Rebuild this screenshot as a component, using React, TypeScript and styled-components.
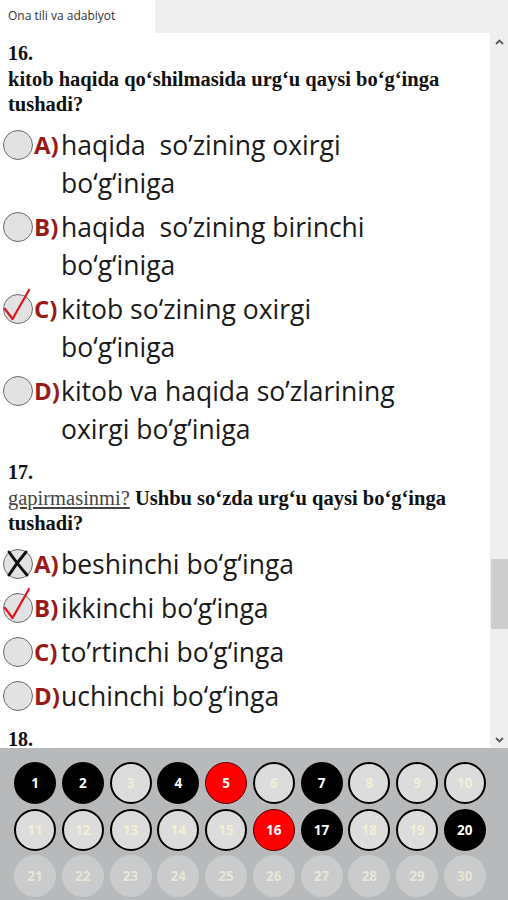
import { FC } from "react";
import styled, { createGlobalStyle, css } from "styled-components";

const GlobalStyle = createGlobalStyle`
  html, body {
    margin: 0;
    padding: 0;
    background: #fff;
  }
  body {
    font-family: "Open Sans", "Noto Sans", sans-serif;
  }
`;

const Screen = styled.div`
  width: 508px;
  height: 900px;
  display: flex;
  flex-direction: column;
  overflow: hidden;
`;

const TabBar = styled.div`
  height: 33px;
  flex-shrink: 0;
  display: flex;
  background: #efefef;
`;

const Tab = styled.div`
  width: 155px;
  box-sizing: border-box;
  padding: 0 0 2px 8px;
  display: flex;
  align-items: center;
  background: #fff;
  font-size: 12px;
  color: #333;
`;

const Body = styled.div`
  flex: 1;
  min-height: 0;
  display: flex;
`;

const Content = styled.div`
  flex: 1;
  overflow: hidden;
  background: #fff;
  padding-top: 7px;
`;

const Scrollbar = styled.div`
  width: 18px;
  flex-shrink: 0;
  display: flex;
  flex-direction: column;
  background: #efefef;
`;

const ArrowButton = styled.div`
  height: 17px;
  display: flex;
  align-items: center;
  justify-content: center;
`;

const Track = styled.div`
  flex: 1;
`;

const Thumb = styled.div<{ $offset: number; $size: number }>`
  margin: ${(p) => p.$offset}px 0 0 1px;
  height: ${(p) => p.$size}px;
  background: #cdcdcd;
`;

const Question = styled.div`
  margin-bottom: 11px;
`;

const QNumber = styled.div`
  padding-left: 8px;
  font-family: "Liberation Serif", "Times New Roman", serif;
  font-weight: bold;
  font-size: 20px;
  line-height: 27px;
  color: #111;
`;

const QText = styled.div`
  padding-left: 8px;
  margin-bottom: 9px;
  font-family: "Liberation Serif", "Times New Roman", serif;
  font-weight: bold;
  font-size: 20.5px;
  line-height: 25px;
  color: #111;
  white-space: nowrap;
`;

const Underlined = styled.span`
  font-weight: normal;
  color: #444;
  text-decoration: underline;
`;

const Line = styled.div`
  white-space: pre;
`;

const OptionList = styled.div`
  display: flex;
  flex-direction: column;
  gap: 6px;
`;

const OptionRow = styled.div`
  display: flex;
  align-items: flex-start;
  font-size: 26.5px;
  line-height: 38px;
  color: #1a1a1a;
`;

const Radio = styled.div`
  position: relative;
  flex-shrink: 0;
  width: 30px;
  height: 30px;
  box-sizing: border-box;
  margin: 4px 1px 0 3px;
  border-radius: 50%;
  border: 1.5px solid #6b6b6b;
  background: #e2e2e2;
`;

const Mark = styled.svg`
  position: absolute;
  left: -1.5px;
  top: -1.5px;
  overflow: visible;
`;

const Letter = styled.span`
  width: 27px;
  flex-shrink: 0;
  font-size: 24px;
  font-weight: bold;
  color: #9a1a1a;
  white-space: nowrap;
`;

const OptionText = styled.div`
  flex: 1;
`;

const Palette = styled.div`
  height: 152px;
  flex-shrink: 0;
  box-sizing: border-box;
  padding: 14px 0 0 14px;
  display: grid;
  grid-template-columns: repeat(10, 42px);
  grid-auto-rows: 42px;
  column-gap: 5.75px;
  row-gap: 4.5px;
  background: #b7b9bb;
`;

type CellState = "done" | "wrong" | "open" | "off";

const cellStyles = {
  done: css`
    background: #000;
    border: 2px solid #000;
    color: #fff;
  `,
  wrong: css`
    background: #ff0000;
    border: 1.5px solid #5a0000;
    color: #fff;
  `,
  open: css`
    background: #dcdcdc;
    border: 2.5px solid #000;
    color: #f3eed6;
  `,
  off: css`
    background: #cacbcc;
    border: 0;
    color: #e9e6d6;
  `,
};

const Cell = styled.div<{ $state: CellState }>`
  width: 42px;
  height: 42px;
  box-sizing: border-box;
  border-radius: 50%;
  display: flex;
  align-items: center;
  justify-content: center;
  font-size: 13.5px;
  font-weight: bold;
  ${(p) => cellStyles[p.$state]}
`;

type Option = {
  letter: string;
  lines: string[];
  mark?: "check" | "cross";
};

const q16: Option[] = [
  { letter: "A)", lines: ["haqida  so’zining oxirgi", "bo‘g‘iniga"] },
  { letter: "B)", lines: ["haqida  so’zining birinchi", "bo‘g‘iniga"] },
  { letter: "C)", lines: ["kitob so‘zining oxirgi", "bo‘g‘iniga"], mark: "check" },
  { letter: "D)", lines: ["kitob va haqida so’zlarining", "oxirgi bo‘g‘iniga"] },
];

const q17: Option[] = [
  { letter: "A)", lines: ["beshinchi bo‘g‘inga"], mark: "cross" },
  { letter: "B)", lines: ["ikkinchi bo‘g‘inga"], mark: "check" },
  { letter: "C)", lines: ["to’rtinchi bo‘g‘inga"] },
  { letter: "D)", lines: ["uchinchi bo‘g‘inga"] },
];

const states: CellState[] = [
  "done", "done", "open", "done", "wrong", "open", "done", "open", "open", "open",
  "open", "open", "open", "open", "open", "wrong", "done", "open", "open", "done",
  "off", "off", "off", "off", "off", "off", "off", "off", "off", "off",
];

const Options: FC<{ items: Option[] }> = ({ items }) => (
  <OptionList>
    {items.map((o) => (
      <OptionRow key={o.letter}>
        <Radio>
          {o.mark === "check" && (
            <Mark width="30" height="30" viewBox="0 0 30 30">
              <path
                d="M2 15 L9.5 25 L26 -4"
                fill="none"
                stroke="#e3141c"
                strokeWidth="2.2"
                strokeLinecap="round"
                strokeLinejoin="round"
              />
            </Mark>
          )}
          {o.mark === "cross" && (
            <Mark width="30" height="30" viewBox="0 0 30 30">
              <path
                d="M6 3 C11 10 17 18 24 26 M23 3 C17 10 11 18 6 26"
                fill="none"
                stroke="#111"
                strokeWidth="3"
                strokeLinecap="round"
              />
            </Mark>
          )}
        </Radio>
        <Letter>{o.letter}</Letter>
        <OptionText>
          {o.lines.map((l) => (
            <Line key={l}>{l}</Line>
          ))}
        </OptionText>
      </OptionRow>
    ))}
  </OptionList>
);

const Chevron: FC<{ up?: boolean }> = ({ up }) => (
  <svg width="9" height="6" viewBox="0 0 9 6">
    <path
      d={up ? "M1 5 L4.5 1.5 L8 5" : "M1 1 L4.5 4.5 L8 1"}
      fill="none"
      stroke="#5c5c5c"
      strokeWidth="1.8"
    />
  </svg>
);

const App: FC = () => (
  <Screen>
    <GlobalStyle />
    <TabBar>
      <Tab>Ona tili va adabiyot</Tab>
    </TabBar>
    <Body>
      <Content>
        <Question>
          <QNumber>16.</QNumber>
          <QText>
            <Line>kitob haqida qo‘shilmasida urg‘u qaysi bo‘g‘inga</Line>
            <Line>tushadi?</Line>
          </QText>
          <Options items={q16} />
        </Question>
        <Question>
          <QNumber>17.</QNumber>
          <QText>
            <Line>
              <Underlined>gapirmasinmi?</Underlined> Ushbu so‘zda urg‘u qaysi bo‘g‘inga
            </Line>
            <Line>tushadi?</Line>
          </QText>
          <Options items={q17} />
        </Question>
        <Question>
          <QNumber>18.</QNumber>
        </Question>
      </Content>
      <Scrollbar>
        <ArrowButton>
          <Chevron up />
        </ArrowButton>
        <Track>
          <Thumb $offset={509} $size={70} />
        </Track>
        <ArrowButton>
          <Chevron />
        </ArrowButton>
      </Scrollbar>
    </Body>
    <Palette>
      {states.map((s, i) => (
        <Cell key={i} $state={s}>
          {i + 1}
        </Cell>
      ))}
    </Palette>
  </Screen>
);

export default App;
